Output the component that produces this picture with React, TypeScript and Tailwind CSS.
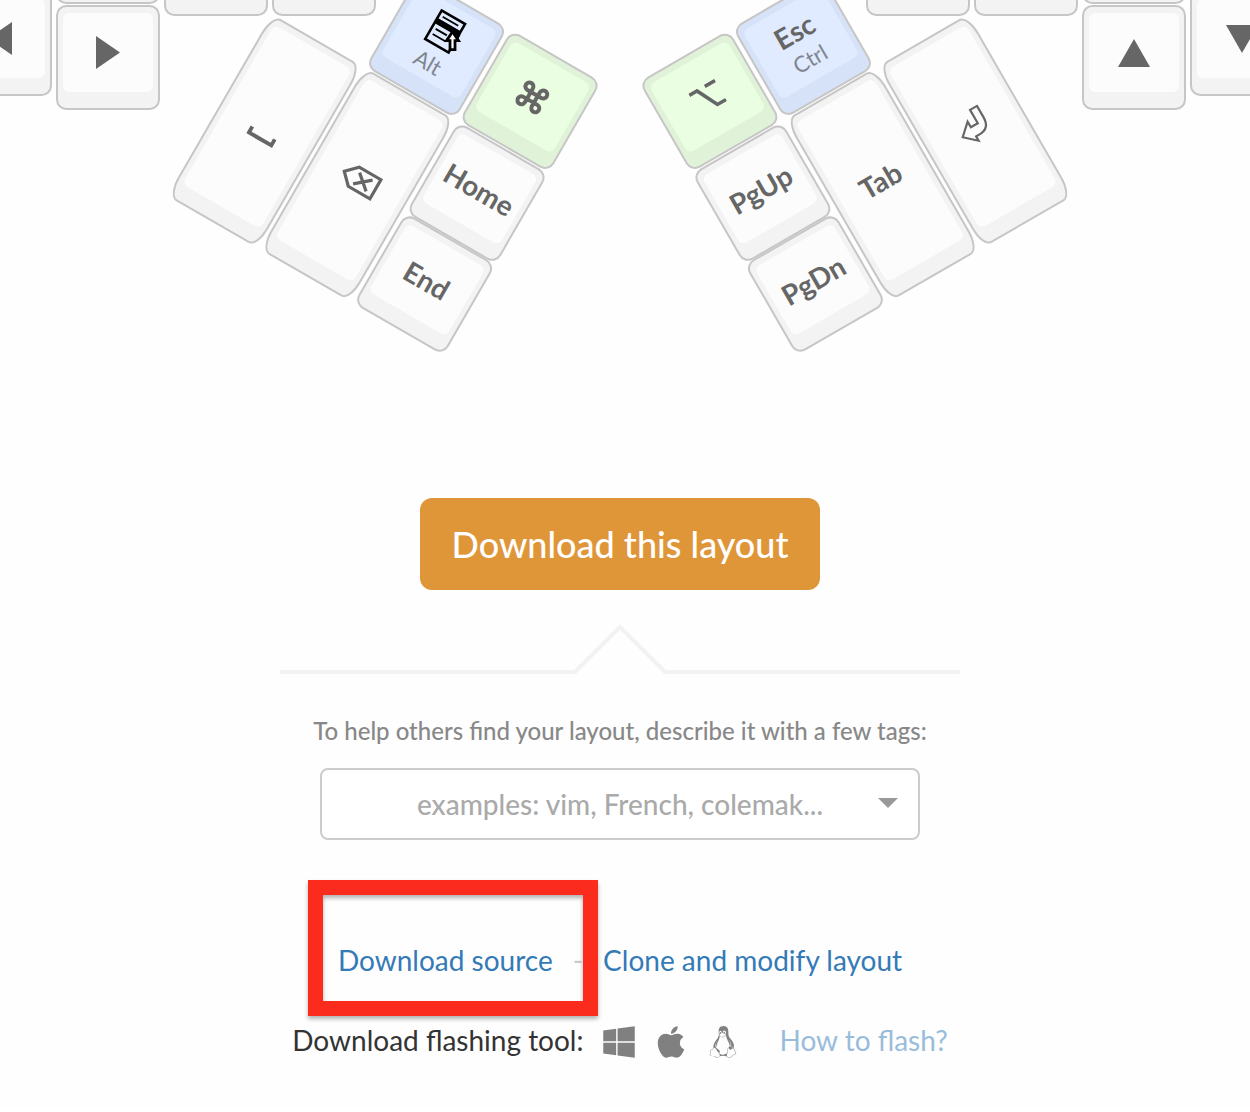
import type { ReactNode } from "react";
import { FaApple, FaLinux, FaWindows } from "react-icons/fa";

type Tone = "white" | "blue" | "green";

const shell: Record<Tone, string> = {
  white: "bg-[#f3f3f3]",
  blue: "bg-[#d6e2f8]",
  green: "bg-[#e0f3d8]",
};
const cap: Record<Tone, string> = {
  white: "bg-[#fcfcfc]",
  blue: "bg-[#e1ebff]",
  green: "bg-[#eaffe2]",
};

function Key({
  tone = "white",
  place = "",
  tall = false,
  children,
}: {
  tone?: Tone;
  place?: string;
  tall?: boolean;
  children?: ReactNode;
}) {
  return (
    <div
      className={`flex w-[104px] shrink-0 rounded-[10%] border-2 border-[#c6c6c6] px-[5px] pt-1.5 pb-4 ${tall ? "h-[210px]" : "h-[105px]"} ${shell[tone]} ${place}`}
    >
      <div
        className={`flex grow flex-col items-center justify-center rounded-md text-[28px] leading-8 font-bold text-[#666] ${cap[tone]}`}
      >
        {children}
      </div>
    </div>
  );
}

function HoldLabel({ children }: { children: ReactNode }) {
  return <span className="mt-1 text-[22px] leading-6 font-normal text-[#80868f]">{children}</span>;
}

function VerticalArrow({ turn = "" }: { turn?: string }) {
  return (
    <svg viewBox="0 0 32 28" className={`h-7 w-8 fill-[#666] ${turn}`} aria-hidden="true">
      <path d="M16 0 32 28H0Z" />
    </svg>
  );
}

function SideArrow({ turn = "" }: { turn?: string }) {
  return (
    <svg viewBox="0 0 24 33" className={`h-[33px] w-6 fill-[#666] ${turn}`} aria-hidden="true">
      <path d="M0 0 24 16.500 0 33Z" />
    </svg>
  );
}

function MenuIcon() {
  return (
    <svg viewBox="0 0 40 40" className="size-10" fill="none" stroke="#000" strokeWidth="2.6" aria-hidden="true">
      <path d="M6 4h27v33H6Z" />
      <path d="M6 14h27M6 17h27v7" strokeWidth="3" />
      <path d="M10 9h18M10 23h13M10 29h15" strokeWidth="1.8" />
      <path
        d="m0 0 6 9H2.500v9h-5V9H-6Z"
        transform="translate(26 17) rotate(-30)"
        fill="#fff"
        strokeWidth="2.8"
      />
    </svg>
  );
}

function CommandIcon() {
  return (
    <svg viewBox="0 0 32 32" className="size-8" fill="none" stroke="#666" strokeWidth="4" aria-hidden="true">
      <path d="M12 12V8a4 4 0 1 0-4 4h16a4 4 0 1 0-4-4v16a4 4 0 1 0 4-4H8a4 4 0 1 0 4 4Z" />
    </svg>
  );
}

function OptionIcon() {
  return (
    <svg viewBox="0 0 30 26" className="h-[26px] w-[30px]" fill="none" stroke="#666" strokeWidth="3.600" aria-hidden="true">
      <path d="M0 2h9l11 22h10M18 2h12" />
    </svg>
  );
}

function BackspaceIcon() {
  return (
    <svg viewBox="0 0 40 28" className="h-7 w-10" fill="none" stroke="#666" strokeWidth="3.200" aria-hidden="true">
      <path d="M2 14 13 3h25v22H13Z" />
      <path d="m16 7.500 15 13M31 7.500l-15 13" />
    </svg>
  );
}

function SpaceIcon() {
  return (
    <svg viewBox="0 0 30 10" className="mt-6 h-2.5 w-7.5" fill="none" stroke="#666" strokeWidth="4" aria-hidden="true">
      <path d="M2 0v7h26V0" />
    </svg>
  );
}

function ReturnIcon() {
  return (
    <svg viewBox="0 0 34 36" className="h-9 w-[34px]" fill="none" stroke="#666" strokeWidth="2.200" aria-hidden="true">
      <path d="M23 2h8v13q0 13-12 13h-4v5L3 22l12-11v6.500h8Z" />
    </svg>
  );
}

const cluster = "absolute top-[-19px] left-1/2 grid grid-rows-[106px_105px_104px]";

export default function App() {
  return (
    <main className="overflow-hidden bg-[#fefefe] pr-2.5 pb-12 font-['Lato',sans-serif] text-[28px] leading-10">
      <section
        aria-label="Keyboard layout"
        className="relative -mr-0.5 flex h-[498px] items-start justify-center gap-[490px]"
      >
        <div className="flex shrink-0 items-start gap-1">
          <Key place="-mt-[9px]"><SideArrow turn="rotate-180" /></Key>
          <div className="-mt-[101px] flex flex-col gap-px">
            <Key />
            <Key><SideArrow /></Key>
          </div>
          <Key place="-mt-[89px]" />
          <Key place="-mt-[89px]" />
        </div>
        <div className="flex shrink-0 items-start gap-1">
          <Key place="-mt-[89px]" />
          <Key place="-mt-[89px]" />
          <div className="-mt-[101px] flex flex-col gap-px">
            <Key />
            <Key><VerticalArrow /></Key>
          </div>
          <Key place="-mt-[9px]"><VerticalArrow turn="rotate-180" /></Key>
        </div>

        <div className={`${cluster} -ml-[396px] rotate-30 grid-cols-[107px_108px_104px]`}>
          <Key tall place="col-start-1 row-span-2 row-start-2"><SpaceIcon /></Key>
          <Key tall place="col-start-2 row-span-2 row-start-2"><BackspaceIcon /></Key>
          <Key tone="blue" place="col-start-2 row-start-1">
            <MenuIcon />
            <HoldLabel>Alt</HoldLabel>
          </Key>
          <Key tone="green" place="col-start-3 row-start-1"><CommandIcon /></Key>
          <Key place="col-start-3 row-start-2">Home</Key>
          <Key place="col-start-3 row-start-3">End</Key>
        </div>
        <div className={`${cluster} ml-[75px] -rotate-30 grid-cols-[108px_107px_104px]`}>
          <Key tone="green" place="col-start-1 row-start-1"><OptionIcon /></Key>
          <Key place="col-start-1 row-start-2">PgUp</Key>
          <Key place="col-start-1 row-start-3">PgDn</Key>
          <Key tone="blue" place="col-start-2 row-start-1">
            <span>Esc</span>
            <HoldLabel>Ctrl</HoldLabel>
          </Key>
          <Key tall place="col-start-2 row-span-2 row-start-2">Tab</Key>
          <Key tall place="col-start-3 row-span-2 row-start-2"><ReturnIcon /></Key>
        </div>
      </section>

      <section aria-label="Download" className="flex flex-col items-center">
        <button type="button" className="h-[92px] w-[400px] rounded-xl bg-[#df9639] text-4xl font-medium text-white">
          Download this layout
        </button>
        <svg viewBox="0 0 680 50" className="mt-[34px] h-[50px] w-[680px]" fill="none" stroke="#f2f2f2" strokeWidth="4" aria-hidden="true">
          <path d="M0 48h295l45-45 45 45h295" />
        </svg>
        <label htmlFor="tags" className="mt-[41px] text-2xl leading-8 font-medium text-[#888]">
          To help others find your layout, describe it with a few tags:
        </label>
        <div className="relative mt-[21px] flex w-[600px]">
          <input
            id="tags"
            placeholder="examples: vim, French, colemak..."
            className="h-[72px] w-full rounded-lg border-2 border-[#ccc] bg-white text-center text-[28px] font-medium placeholder:text-[#aaa]"
          />
          <svg viewBox="0 0 20 10" className="absolute top-[30px] right-[22px] h-2.5 w-5 fill-[#999]" aria-hidden="true">
            <path d="M0 0h20L10 10Z" />
          </svg>
        </div>
        <nav className="relative mt-[100px] flex items-center gap-5 text-[#337ab7]">
          <a href="#source">Download source</a>
          <span className="text-[#ccc]">-</span>
          <a href="#clone">Clone and modify layout</a>
          <div className="pointer-events-none absolute -top-[60px] -left-[30px] h-[136px] w-[290px] border-[15px] border-[#fb2c1d] drop-shadow-[0_3px_2px_rgba(0,0,0,0.3)]" />
        </nav>
        <div className="mt-10 flex items-center text-[#333]">
          <span>Download flashing tool:</span>
          <div className="mt-1 ml-5 flex items-center gap-5 text-[#808080]">
            <FaWindows className="h-9 w-8" />
            <FaApple className="h-9 w-8" />
            <FaLinux className="size-8" />
          </div>
          <a href="#flash" className="ml-10 text-[#99bcdb]">How to flash?</a>
        </div>
      </section>
    </main>
  );
}
